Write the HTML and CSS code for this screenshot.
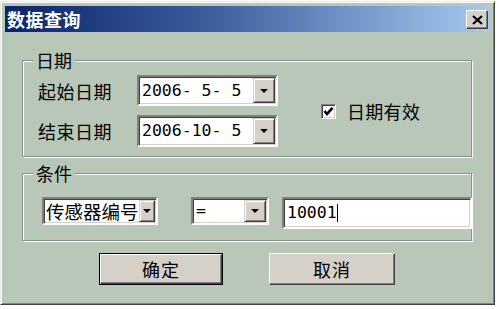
FILE: index.html
```html
<!DOCTYPE html>
<html lang="zh-CN">
<head>
<meta charset="utf-8">
<title>数据查询</title>
<link rel="stylesheet" href="styles.css">
</head>
<body>
<div class="dialog">
  <div class="titlebar">
    <span class="title">数据查询</span>
    <span class="close-btn">
      <svg width="11" height="10" viewBox="0 0 11 10"><path d="M1 1 L10 9 M10 1 L1 9" stroke="#000" stroke-width="2.2" fill="none"/></svg>
    </span>
  </div>
  <div class="content">
    <fieldset class="group group-date">
      <legend>日期</legend>
      <div class="date-rows">
        <div class="row row-first">
          <span class="label">起始日期</span>
          <div class="combo combo-date">
            <span class="value mono">2006- 5- 5</span>
            <span class="drop"><span class="arrow"></span></span>
          </div>
        </div>
        <div class="row row-second">
          <span class="label">结束日期</span>
          <div class="combo combo-date">
            <span class="value mono">2006-10- 5</span>
            <span class="drop"><span class="arrow"></span></span>
          </div>
        </div>
      </div>
      <div class="check">
        <span class="check-box">
          <svg width="11" height="11" viewBox="0 0 11 11"><path d="M1.5 5 L4 8 L9.5 1.8" stroke="#000" stroke-width="2.6" fill="none"/></svg>
        </span>
        <span class="check-label">日期有效</span>
      </div>
    </fieldset>
    <fieldset class="group group-cond">
      <legend>条件</legend>
      <div class="cond-row">
        <div class="combo combo-field">
          <span class="value cjk">传感器编号</span>
          <span class="drop drop-narrow"><span class="arrow"></span></span>
        </div>
        <div class="combo combo-op">
          <span class="value mono">=</span>
          <span class="drop"><span class="arrow"></span></span>
        </div>
        <div class="textbox">
          <span class="value mono">10001</span><span class="caret"></span>
        </div>
      </div>
    </fieldset>
    <div class="buttons">
      <div class="btn btn-default"><span class="btn-inner">确定</span></div>
      <div class="btn btn-cancel"><span class="btn-inner">取消</span></div>
    </div>
  </div>
</div>
</body>
</html>
```
FILE: styles.css
```css
html, body {
  margin: 0;
  padding: 0;
  background: #ffffff;
}

body {
  width: 499px;
  height: 309px;
  overflow: hidden;
  font-family: "Noto Sans CJK SC", "Noto Sans", sans-serif;
  color: #000;
}

.dialog {
  box-sizing: border-box;
  width: 495px;
  height: 304px;
  margin-top: 1px;
  padding: 4px;
  background: #b8c7b7;
  border: 1px solid;
  border-color: #e6ebe6 #404040 #404040 #e6ebe6;
  box-shadow: inset 1px 1px 0 #ffffff, inset -1px -1px 0 #808080;
}

.titlebar {
  height: 26px;
  display: flex;
  align-items: center;
  justify-content: space-between;
  background: linear-gradient(to right, #0a246a 0%, #3a5a9a 40%, #a6caf0 100%);
}

.title {
  color: #ffffff;
  font-weight: bold;
  font-size: 18px;
  line-height: 26px;
  padding-left: 2px;
  letter-spacing: 0.5px;
}

.close-btn {
  box-sizing: border-box;
  width: 22px;
  height: 19px;
  margin-right: 2px;
  margin-top: 1px;
  background: #d5d1c9;
  border: 1px solid;
  border-color: #ffffff #404040 #404040 #ffffff;
  box-shadow: inset -1px -1px 0 #808080;
  display: flex;
  align-items: center;
  justify-content: center;
}

.content {
  padding: 18px 0 0 17px;
}

.group {
  box-sizing: border-box;
  width: 450px;
  min-width: 0;
  margin: 0;
  border: 1px solid #86918a;
  box-shadow: inset 1px 1px 0 #ffffff, 1px 1px 0 #ffffff;
}

.group legend {
  font-size: 18px;
  line-height: 20px;
  padding: 0 3px;
  background: #b8c7b7;
}

.group-date {
  display: flex;
  align-items: center;
  padding: 5px 0 9px 14px;
}

.group-date legend {
  margin-left: -4px;
}

.date-rows {
  display: flex;
  flex-direction: column;
  gap: 9px;
}

.row {
  display: flex;
  align-items: center;
}

.label {
  width: 99px;
  font-size: 18px;
  line-height: 20px;
  letter-spacing: 0.5px;
  padding-left: 1px;
}

.combo {
  box-sizing: border-box;
  display: flex;
  align-items: center;
  background: #ffffff;
  border: 2px solid;
  border-color: #808080 #ffffff #ffffff #808080;
  box-shadow: inset 1px 1px 0 #404040, inset -1px -1px 0 #d5d1c9;
  overflow: hidden;
}

.combo-date {
  width: 141px;
  height: 31px;
}

.row-second .combo-date {
  height: 32px;
}

.value {
  flex: 1;
  white-space: pre;
  overflow: hidden;
  padding-left: 3px;
}

.mono {
  font-family: "DejaVu Sans Mono", "Liberation Mono", monospace;
  font-size: 16.5px;
  line-height: 20px;
}

.cjk {
  font-size: 18.5px;
  line-height: 22px;
  padding-left: 2px;
}

.drop {
  box-sizing: border-box;
  flex: none;
  width: 22px;
  align-self: stretch;
  margin: 1px 1px 1px 0;
  background: #d5d1c9;
  border: 1px solid;
  border-color: #d5d1c9 #404040 #404040 #d5d1c9;
  box-shadow: inset 1px 1px 0 #ffffff, inset -1px -1px 0 #808080;
  display: flex;
  align-items: center;
  justify-content: center;
}

.drop-narrow {
  width: 16px;
}

.arrow {
  width: 0;
  height: 0;
  border-left: 4px solid transparent;
  border-right: 4px solid transparent;
  border-top: 4px solid #000;
}

.check {
  display: flex;
  align-items: center;
  margin-left: 43px;
  gap: 11px;
}

.check-box {
  box-sizing: border-box;
  width: 15px;
  height: 15px;
  background: #ffffff;
  border: 1px solid;
  border-color: #808080 #ffffff #ffffff #808080;
  box-shadow: inset 1px 1px 0 #404040, inset -1px -1px 0 #d5d1c9;
  display: flex;
  align-items: center;
  justify-content: center;
}

.check-label {
  font-size: 18px;
  line-height: 20px;
  letter-spacing: 0.3px;
}

.group-cond {
  margin-top: 6px;
  padding: 14px 0 11px 19px;
}

.group-cond legend {
  margin-left: -9px;
}

.cond-row {
  display: flex;
  align-items: flex-start;
}

.combo-field {
  flex: none;
  width: 116px;
  height: 28px;
}

.combo-op {
  flex: none;
  width: 78px;
  height: 28px;
  margin-left: 33px;
}

.textbox {
  box-sizing: border-box;
  flex: none;
  width: 190px;
  height: 32px;
  margin-left: 13px;
  display: flex;
  align-items: center;
  background: #ffffff;
  border: 2px solid;
  border-color: #808080 #ffffff #ffffff #808080;
  box-shadow: inset 1px 1px 0 #404040, inset -1px -1px 0 #d5d1c9;
}

.textbox .value {
  flex: none;
  padding-left: 3px;
}

.caret {
  width: 1px;
  height: 18px;
  background: #000;
}

.buttons {
  display: flex;
  margin-top: 12px;
  padding-left: 77px;
  gap: 46px;
}

.btn {
  box-sizing: border-box;
  height: 32px;
  background: #d5d1c9;
  display: flex;
}

.btn-inner {
  box-sizing: border-box;
  flex: 1;
  display: flex;
  align-items: center;
  justify-content: center;
  font-size: 18px;
  line-height: 20px;
  letter-spacing: 1px;
  border: 1px solid;
  border-color: #ffffff #404040 #404040 #ffffff;
  box-shadow: inset -1px -1px 0 #808080;
}

.btn-default {
  width: 124px;
  border: 1px solid #000;
}

.btn-cancel {
  width: 126px;
}
```
